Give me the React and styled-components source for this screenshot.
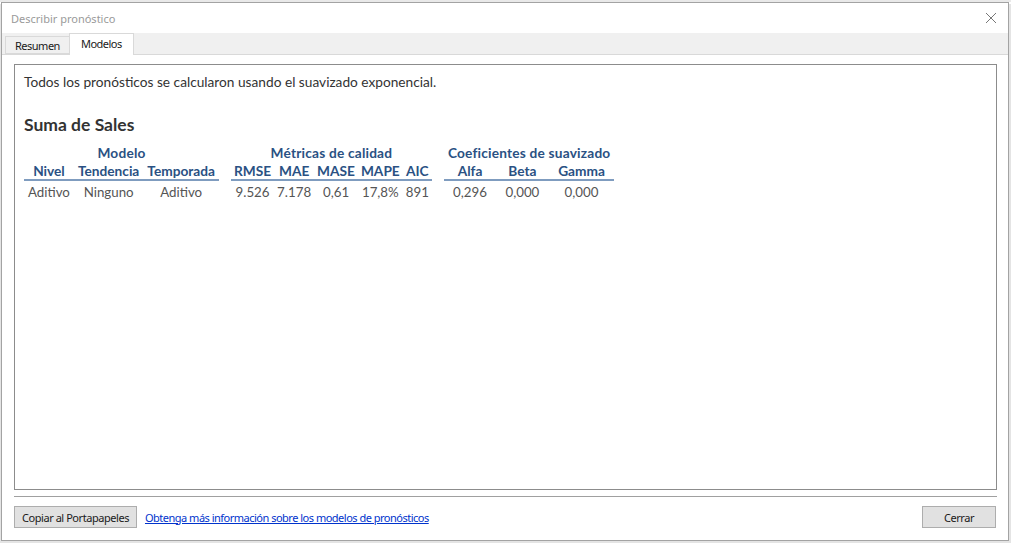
import React from "react";
import styled, { createGlobalStyle } from "styled-components";

const Global = createGlobalStyle`
  html, body { margin: 0; padding: 0; }
  body {
    background: #e9e9e9;
    width: 1011px;
    height: 543px;
    overflow: hidden;
    font-family: "Noto Sans", "DejaVu Sans", sans-serif;
  }
`;

const Backdrop = styled.div`
  position: relative;
  width: 1011px;
  height: 543px;
  background: linear-gradient(#ffffff, #ffffff) 0 0 / 1011px 2px no-repeat, #e4e4e4;
`;

const GreenTab = styled.div`
  position: absolute;
  left: 330px;
  top: 0;
  width: 142px;
  height: 3px;
  background: #1e9e6a;
  border-radius: 0 0 6px 6px;
`;

const Window = styled.div`
  position: relative;
  margin: 2px 0 0 1px;
  width: 1008px;
  height: 539px;
  box-sizing: border-box;
  border: 1px solid #a3a3a3;
  background: #ffffff;
  display: flex;
  flex-direction: column;
`;

const TitleBar = styled.div`
  height: 30px;
  flex: none;
  display: flex;
  align-items: center;
  justify-content: space-between;
  padding: 0 10px 0 9px;
`;

const Title = styled.span`
  font-size: 11px;
  color: #9a9a9a;
`;

const CloseBtn = styled.span`
  display: flex;
  width: 14px;
  height: 14px;
  align-items: center;
  justify-content: center;
`;

const TabStrip = styled.div`
  height: 21px;
  flex: none;
  background: #f0f0f0;
  border-bottom: 1px solid #d9d9d9;
  display: flex;
  align-items: flex-end;
  padding-left: 3px;
`;

const Tab = styled.div`
  box-sizing: border-box;
  height: ${(p) => (p.$active ? "22px" : "18px")};
  margin-bottom: ${(p) => (p.$active ? "-1px" : "0")};
  padding: 0 ${(p) => (p.$active ? "11px" : "9px")};
  padding-bottom: ${(p) => (p.$active ? "2px" : "0")};
  display: flex;
  align-items: center;
  font-size: 11px;
  letter-spacing: -0.5px;
  color: #1a1a1a;
  background: ${(p) => (p.$active ? "#ffffff" : "#f0f0f0")};
  border: 1px solid #d9d9d9;
  border-bottom: ${(p) => (p.$active ? "none" : "1px solid #d9d9d9")};
  margin-left: ${(p) => (p.$active ? "-1px" : "0")};
`;

const Panel = styled.div`
  flex: 1;
  display: flex;
  flex-direction: column;
  padding: 9px 11px 0 12px;
  min-height: 0;
`;

const ContentBox = styled.div`
  flex: 1;
  border: 1px solid #8c8c8c;
  padding: 8px 9px;
  font-family: "Lato", "Noto Sans", sans-serif;
`;

const Intro = styled.div`
  font-size: 13.7px;
  line-height: 17px;
  color: #333333;
`;

const Heading = styled.div`
  margin-top: 25px;
  font-size: 17.5px;
  line-height: 20px;
  font-weight: 700;
  color: #333333;
`;

const Groups = styled.div`
  display: flex;
  gap: 12px;
  margin-top: 9px;
`;

const GroupTable = styled.table`
  border-collapse: collapse;
`;

const GroupTitle = styled.th`
  font-size: 13.7px;
  letter-spacing: 0.2px;
  font-weight: 700;
  color: #2a5183;
  height: 18px;
  line-height: 18px;
  padding: 0 4px;
  text-align: center;
  white-space: nowrap;
`;

const ColHead = styled.th`
  font-size: 13.7px;
  font-weight: 700;
  color: #2a5183;
  height: 17px;
  line-height: 17px;
  padding: 0 ${(p) => p.$pad}px;
  text-align: center;
  border-bottom: 2px solid #7f9cbf;
  white-space: nowrap;
`;

const Cell = styled.td`
  font-size: 13.3px;
  color: #555555;
  height: 20px;
  line-height: 20px;
  padding: 1px ${(p) => p.$pad}px 0;
  text-align: center;
  white-space: nowrap;
`;

const Footer = styled.div`
  flex: none;
  padding: 6px 0 12px;
`;

const Separator = styled.div`
  height: 1px;
  background: #a0a0a0;
`;

const ButtonRow = styled.div`
  display: flex;
  align-items: center;
  margin-top: 9px;
  gap: 8px;
`;

const Button = styled.button`
  box-sizing: border-box;
  height: 22px;
  min-width: ${(p) => p.$min || 0}px;
  padding: 0 7px;
  background: #e1e1e1;
  border: 1px solid #adadad;
  border-radius: 0;
  font-family: "Noto Sans", sans-serif;
  font-size: 11px;
  letter-spacing: -0.45px;
  color: #1a1a1a;
  margin-left: ${(p) => (p.$right ? "auto" : "0")};
  margin-right: ${(p) => (p.$right ? "1px" : "0")};
`;

const Link = styled.a`
  font-family: "Noto Sans", sans-serif;
  font-size: 11px;
  letter-spacing: -0.5px;
  color: #0033cc;
  text-decoration: underline;
`;

const groups = [
  {
    title: "Modelo",
    cols: ["Nivel", "Tendencia", "Temporada"],
    vals: ["Aditivo", "Ninguno", "Aditivo"],
    pad: 4,
  },
  {
    title: "Métricas de calidad",
    cols: ["RMSE", "MAE", "MASE", "MAPE", "AIC"],
    vals: ["9.526", "7.178", "0,61", "17,8%", "891"],
    pad: 3,
  },
  {
    title: "Coeficientes de suavizado",
    cols: ["Alfa", "Beta", "Gamma"],
    vals: ["0,296", "0,000", "0,000"],
    pad: 8,
  },
];

export default function App() {
  return (
    <>
      <Global />
      <Backdrop>
        <GreenTab />
        <Window>
          <TitleBar>
            <Title>Describir pronóstico</Title>
            <CloseBtn>
              <svg width="12" height="12" viewBox="0 0 12 12">
                <path d="M1 1L11 11M11 1L1 11" stroke="#777" strokeWidth="1" />
              </svg>
            </CloseBtn>
          </TitleBar>
          <TabStrip>
            <Tab>Resumen</Tab>
            <Tab $active>Modelos</Tab>
          </TabStrip>
          <Panel>
            <ContentBox>
              <Intro>Todos los pronósticos se calcularon usando el suavizado exponencial.</Intro>
              <Heading>Suma de Sales</Heading>
              <Groups>
                {groups.map((g) => (
                  <GroupTable key={g.title}>
                    <thead>
                      <tr>
                        <GroupTitle colSpan={g.cols.length}>{g.title}</GroupTitle>
                      </tr>
                      <tr>
                        {g.cols.map((c) => (
                          <ColHead key={c} $pad={g.pad}>{c}</ColHead>
                        ))}
                      </tr>
                    </thead>
                    <tbody>
                      <tr>
                        {g.vals.map((v, i) => (
                          <Cell key={i} $pad={g.pad}>{v}</Cell>
                        ))}
                      </tr>
                    </tbody>
                  </GroupTable>
                ))}
              </Groups>
            </ContentBox>
            <Footer>
              <Separator />
              <ButtonRow>
                <Button>Copiar al Portapapeles</Button>
                <Link href="#">Obtenga más información sobre los modelos de pronósticos</Link>
                <Button $right $min={74}>Cerrar</Button>
              </ButtonRow>
            </Footer>
          </Panel>
        </Window>
      </Backdrop>
    </>
  );
}
